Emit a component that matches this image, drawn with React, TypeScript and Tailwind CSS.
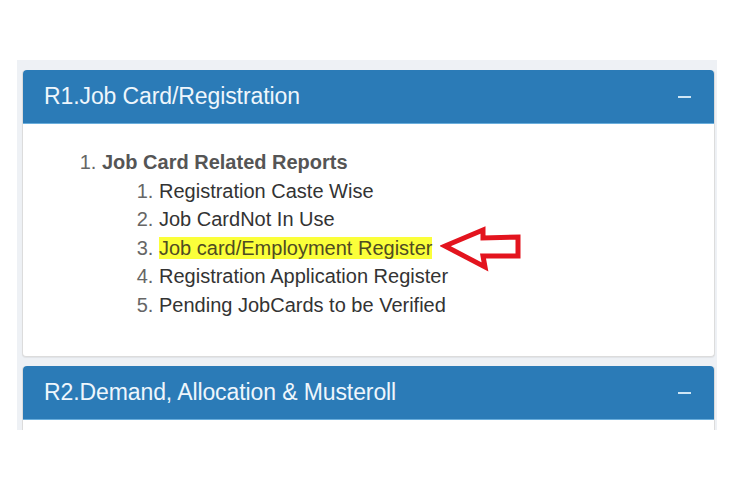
import React from 'react';

const items = [
  'Registration Caste Wise',
  'Job CardNot In Use',
  'Job card/Employment Register',
  'Registration Application Register',
  'Pending JobCards to be Verified',
];

const PanelHeader: React.FC<{ title: string }> = ({ title }) => (
  <div className="h-[54px] flex items-center justify-between pl-[21px] pr-[23px] bg-[#2b7bb7] border-b border-[#6aaedc] rounded-t-[4px]">
    <span className="text-[23px] text-[#eef6fc] tracking-[-0.1px]">{title}</span>
    <span className="block w-[13px] h-[2px] bg-[#cfe6f5]"></span>
  </div>
);

export default function App() {
  return (
    <div className="w-[734px] h-[490px] bg-white pt-[60px] pl-[17px]" style={{ fontFamily: '"Liberation Sans", Arial, sans-serif' }}>
      <div className="w-[700px] h-[370px] bg-[#eef1f5] pt-[10px] pl-[5px] pr-[2px] overflow-hidden flex flex-col gap-[9px]">
        <div className="relative bg-white border border-t-0 border-[#dcdcdc] rounded-[4px] shadow-[0_1px_1px_rgba(0,0,0,0.06)]">
          <PanelHeader title="R1.Job Card/Registration" />
          <div className="h-[232px] pt-[24px] pl-[79px]">
            <ol className="list-decimal text-[20px] leading-[28.6px] marker:text-[#666] text-[#555]">
              <li>
                <span className="font-bold text-[#555]">Job Card Related Reports</span>
                <ol className="list-decimal pl-[57px] font-normal">
                  {items.map((t, i) => (
                    <li key={t} className="text-[#333]">
                      {i === 2 ? (
                        <span className="bg-[#fbff3a] text-[#4f4b22]">{t}</span>
                      ) : (
                        t
                      )}
                    </li>
                  ))}
                </ol>
              </li>
            </ol>
          </div>
          <svg className="absolute left-[417px] top-[156px]" width="86" height="46" viewBox="0 0 86 46">
            <path
              d="M5 20 L43 4 L43 12 L78 11 L78 30 L43 30 L45 41 Z"
              fill="white"
              stroke="#e3141e"
              strokeWidth="5"
              strokeLinejoin="miter"
            />
          </svg>
        </div>
        <div className="bg-white border border-t-0 border-[#dcdcdc] rounded-[4px] h-[80px] shrink-0">
          <PanelHeader title="R2.Demand, Allocation & Musteroll" />
        </div>
      </div>
    </div>
  );
}
